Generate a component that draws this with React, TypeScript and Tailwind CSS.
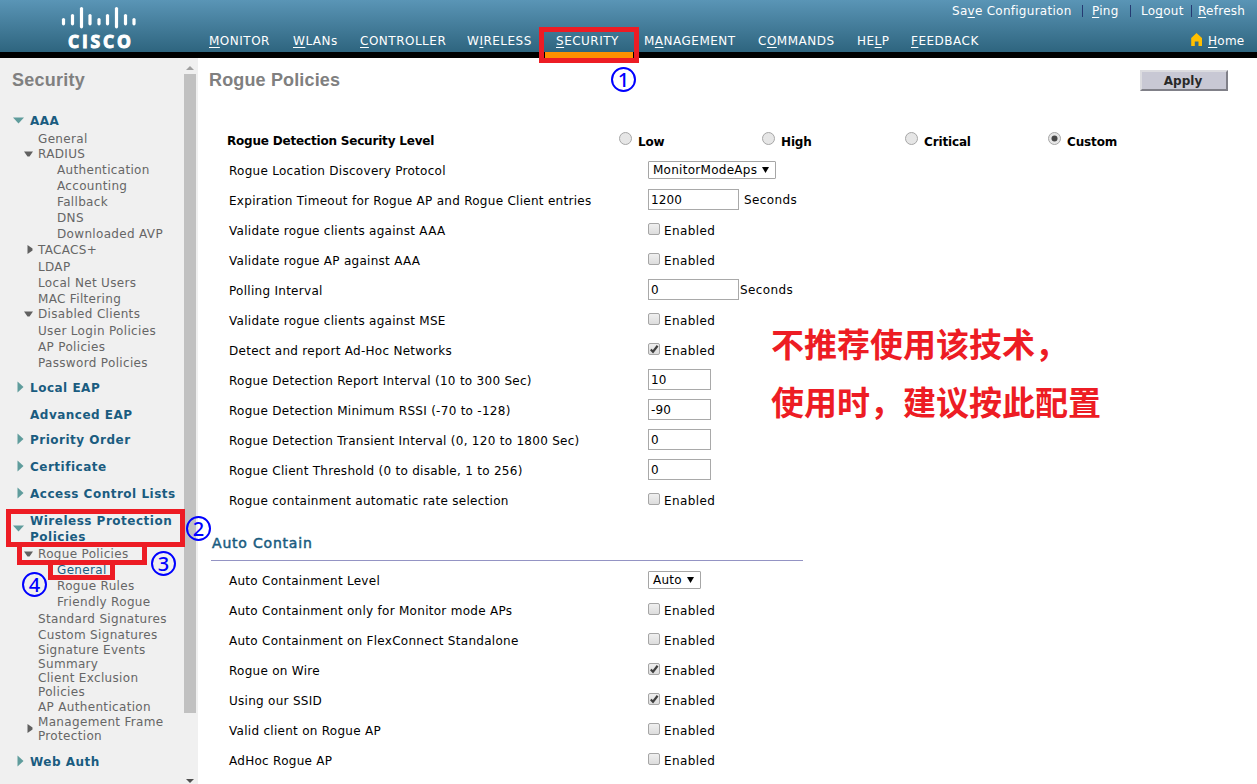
import React from "react";

type Mark = "down" | "right" | undefined;
type NavRow = { text: string; h: string; level: 0 | 1 | 2; mark?: Mark; markY?: string; active?: boolean };

const tree: NavRow[] = [
  { text: "AAA", h: "h-[21px]", level: 0, mark: "down" },
  { text: "General", h: "h-[18px]", level: 1 },
  { text: "RADIUS", h: "h-[15px]", level: 1, mark: "down" },
  { text: "Authentication", h: "h-[16px]", level: 2 },
  { text: "Accounting", h: "h-[16px]", level: 2 },
  { text: "Fallback", h: "h-[16px]", level: 2 },
  { text: "DNS", h: "h-[16px]", level: 2 },
  { text: "Downloaded AVP", h: "h-[16px]", level: 2 },
  { text: "TACACS+", h: "h-[16px]", level: 1, mark: "right" },
  { text: "LDAP", h: "h-[17px]", level: 1 },
  { text: "Local Net Users", h: "h-[16px]", level: 1 },
  { text: "MAC Filtering", h: "h-[16px]", level: 1 },
  { text: "Disabled Clients", h: "h-[15px]", level: 1, mark: "down" },
  { text: "User Login Policies", h: "h-[17px]", level: 1 },
  { text: "AP Policies", h: "h-[16px]", level: 1 },
  { text: "Password Policies", h: "h-[16px]", level: 1 },
  { text: "Local EAP", h: "h-[25px]", level: 0, mark: "right" },
  { text: "Advanced EAP", h: "h-[27px]", level: 0 },
  { text: "Priority Order", h: "h-[25px]", level: 0, mark: "right" },
  { text: "Certificate", h: "h-[27px]", level: 0, mark: "right" },
  { text: "Access Control Lists", h: "h-[27px]", level: 0, mark: "right" },
  { text: "Wireless Protection", h: "h-[27px]", level: 0, mark: "down", markY: "pt-[17px]" },
  { text: "Policies", h: "h-[16px]", level: 0 },
  { text: "Rogue Policies", h: "h-[17px]", level: 1, mark: "down" },
  { text: "General", h: "h-[16px]", level: 2, active: true },
  { text: "Rogue Rules", h: "h-[16px]", level: 2 },
  { text: "Friendly Rogue", h: "h-[16px]", level: 2 },
  { text: "Standard Signatures", h: "h-[17px]", level: 1 },
  { text: "Custom Signatures", h: "h-[16px]", level: 1 },
  { text: "Signature Events", h: "h-[15px]", level: 1 },
  { text: "Summary", h: "h-[14px]", level: 1 },
  { text: "Client Exclusion", h: "h-[14px]", level: 1 },
  { text: "Policies", h: "h-[14px]", level: 1 },
  { text: "AP Authentication", h: "h-[15px]", level: 1 },
  { text: "Management Frame", h: "h-[15px]", level: 1, mark: "right", markY: "pt-[14px]" },
  { text: "Protection", h: "h-[14px]", level: 1 },
  { text: "Web Auth", h: "h-[26px]", level: 0, mark: "right" },
];

function Triangle({ mark, level }: { mark: Mark; level: number }) {
  if (!mark) return null;
  if (level === 0)
    return mark === "down" ? (
      <svg width="11" height="7" className="fill-[#5f9c9c]"><path d="M0 0.5H11L5.5 6.5Z" /></svg>
    ) : (
      <svg width="7" height="12" className="fill-[#5f9c9c]"><path d="M0.5 0.5V11.5L6.5 6Z" /></svg>
    );
  return mark === "down" ? (
    <svg width="9" height="6" className="mt-[2px] fill-[#606060]"><path d="M0 0.5H9L5.5 5.5H3.5Z" /></svg>
  ) : (
    <svg width="6" height="9" className="fill-[#606060]"><path d="M0.5 0V9L5.5 5.5V3.5Z" /></svg>
  );
}

function TreeRow({ row }: { row: NavRow }) {
  const gutter = row.level === 0 ? "w-[30px] pr-[6px]" : row.level === 1 ? "w-[38px] pr-[5px]" : "w-[57px]";
  const look =
    row.level === 0
      ? "font-bold text-[#1a5c80] tracking-[0.5px]"
      : row.active
        ? "text-[#1a5c80] tracking-[0.33px]"
        : "text-[#666] tracking-[0.33px]";
  return (
    <div className={"flex shrink-0 items-end " + row.h}>
      <span className={"flex h-[18px] shrink-0 items-center justify-end " + gutter + " " + (row.markY ?? "")}>
        <Triangle mark={row.mark} level={row.level} />
      </span>
      <span className={"whitespace-nowrap text-[12px] leading-4 " + look}>{row.text}</span>
    </div>
  );
}

const tabs = [
  { pre: "", key: "M", post: "ONITOR", w: "w-[84px]" },
  { pre: "", key: "W", post: "LANs", w: "w-[67px]" },
  { pre: "", key: "C", post: "ONTROLLER", w: "w-[107px]" },
  { pre: "W", key: "I", post: "RELESS", w: "w-[89px]" },
  { pre: "", key: "S", post: "ECURITY", w: "w-[88px]" },
  { pre: "M", key: "A", post: "NAGEMENT", w: "w-[114px]" },
  { pre: "C", key: "O", post: "MMANDS", w: "w-[99px]" },
  { pre: "HE", key: "L", post: "P", w: "w-[54px]" },
  { pre: "", key: "F", post: "EEDBACK", w: "w-[80px]" },
];

function U({ children }: { children: React.ReactNode }) {
  return <span className="underline decoration-1 underline-offset-2">{children}</span>;
}

function Logo() {
  const bars = [
    [62, 18, 25], [71, 14, 25], [80, 7, 28], [88.5, 14, 25], [97.5, 18, 25],
    [106, 14, 25], [115, 7, 28], [124, 14, 25], [132.5, 18, 25],
  ];
  return (
    <svg width="198" height="52" className="shrink-0 overflow-visible">
      <g stroke="#fff" strokeWidth="3.2" strokeLinecap="round">
        {bars.map(([x, a, b]) => (
          <line key={x} x1={x + 1.5} x2={x + 1.5} y1={a + 1.5} y2={b - 1.2} />
        ))}
      </g>
      <text x="68" y="47.5" textLength="63" fill="#fff" stroke="#fff" strokeWidth="1" className="font-['Open_Sans',sans-serif] text-[17.5px] font-bold">CISCO</text>
    </svg>
  );
}

function Check({ on }: { on?: boolean }) {
  return (
    <svg width="12" height="12" className="mb-[3px] shrink-0">
      <defs>
        <linearGradient id="box" x1="0" y1="0" x2="0" y2="1">
          <stop offset="0" stopColor="#f0f0f0" /><stop offset="1" stopColor="#dcdcdc" />
        </linearGradient>
      </defs>
      <rect x="0.5" y="0.5" width="11" height="11" rx="1.5" fill="url(#box)" stroke="#a6a6a6" />
      {on && <path d="M2.8 6.4L5 8.7L9.6 2.8" fill="none" stroke="#404040" strokeWidth="2.2" />}
    </svg>
  );
}

function Radio({ label, on }: { label: string; on?: boolean }) {
  return (
    <div className="flex w-[143px] items-center">
      <svg width="13" height="13" className="mb-[3px] shrink-0">
        <circle cx="6.5" cy="6.5" r="6" fill="#e6e6e6" stroke="#a6a6a6" />
        {on && <circle cx="6.5" cy="6.5" r="3" fill="#484848" />}
      </svg>
      <span className="ml-[6px] pt-[3px] tracking-[-0.15px]">{label}</span>
    </div>
  );
}

function Enabled({ on }: { on?: boolean }) {
  return (
    <>
      <Check on={on} />
      <span className="ml-1 pt-px tracking-[0.38px]">Enabled</span>
    </>
  );
}

function Field({ value, wide }: { value: string; wide?: boolean }) {
  return (
    <input
      defaultValue={value}
      className={"mb-[2px] h-[21px] border border-[#a9a9a9] bg-white pl-[2px] pt-[2px] text-[12px] tracking-[0.1px] outline-none " + (wide ? "w-[91px]" : "w-[63px]")}
    />
  );
}

function Pick({ value, w }: { value: string; w: string }) {
  return (
    <div className={"flex h-[18px] items-center justify-between rounded-[1px] border border-[#a6a6a6] bg-white pl-1 pr-[6px] " + w}>
      <span className="tracking-[0.27px]">{value}</span>
      <svg width="7" height="6" className="mb-px"><path d="M0 0H7L3.5 6Z" /></svg>
    </div>
  );
}

function Row({ label, children }: { label: string; children: React.ReactNode }) {
  return (
    <div className="flex h-[30px] items-center whitespace-nowrap text-[12px]">
      <span className="w-[420px] shrink-0 pl-px pt-px tracking-[0.28px]">{label}</span>
      {children}
    </div>
  );
}

function Badge({ n, pos }: { n: string; pos: string }) {
  return (
    <span className={"absolute flex size-[25px] items-center justify-center rounded-full border-[2.5px] border-[#0000ff] font-['Noto_Sans',sans-serif] text-[20px] font-medium leading-none text-[#0000ff] " + pos}>
      {n}
    </span>
  );
}

export default function App() {
  return (
    <div className="relative flex h-[784px] w-[1257px] flex-col overflow-hidden bg-white font-['DejaVu_Sans',sans-serif] text-[12px] text-black">
      <header className="flex h-[58px] shrink-0 border-b-[6px] border-black bg-linear-to-b from-[#5a95b6] to-[#2e657f] text-white">
        <Logo />
        <div className="flex flex-1 flex-col">
          <div className="flex h-[22px] items-center whitespace-nowrap pl-[754px] tracking-[0.27px]">
            <span className="w-[130px] shrink-0">Sa<U>v</U>e Configuration</span>
            <span className="h-3 w-px shrink-0 bg-[#253a72]" />
            <span className="w-[47px] shrink-0 pl-[9px]"><U>P</U>ing</span>
            <span className="h-3 w-px shrink-0 bg-[#253a72]" />
            <span className="w-[60px] shrink-0 pl-[10px]">Lo<U>g</U>out</span>
            <span className="h-3 w-px shrink-0 bg-[#253a72]" />
            <span className="shrink-0 pl-[6px]"><U>R</U>efresh</span>
          </div>
          <div className="flex h-[30px] items-center whitespace-nowrap pl-[11px] pt-[8px] tracking-[0.5px]">
            {tabs.map((t) => (
              <span key={t.post} className={"shrink-0 " + t.w}>{t.pre}<U>{t.key}</U>{t.post}</span>
            ))}
            <svg width="11" height="13" className="mb-[4px] ml-[200px] shrink-0"><path d="M5.5 0L11 5V13H7.5V8.5H3.8V13H0.2V5Z" fill="#ffc000" /></svg>
            <span className="ml-[6px] tracking-[0.27px]"><U>H</U>ome</span>
          </div>
        </div>
      </header>

      <div className="flex min-h-0 flex-1">
        <aside className="flex w-[198px] shrink-0 bg-[#f0f0f0]">
          <nav className="flex h-[726px] w-[184px] flex-col overflow-hidden">
            <h1 className="h-[50px] shrink-0 pl-3 pt-[10px] font-['Liberation_Sans',sans-serif] text-[18px] font-bold leading-6 tracking-[0.25px] text-[#808080]">Security</h1>
            {tree.map((r, i) => <TreeRow key={i} row={r} />)}
          </nav>
          <div className="flex w-3 flex-col items-center justify-between pb-[1px] pt-[8px]">
            <svg width="8" height="4" className="fill-[#a0a0a0]"><path d="M0 4L4 0L8 4Z" /></svg>
            <div className="mb-[66px] mt-1 h-[639px] w-3 shrink-0 bg-[#c1c1c1]" />
            <svg width="8" height="4" className="shrink-0 fill-[#505050]"><path d="M0 0L4 4L8 0Z" /></svg>
          </div>
        </aside>

        <main className="flex-1">
          <div className="flex h-[67px] justify-between pl-[11px] pr-[29px] pt-[10px]">
            <h2 className="font-['Liberation_Sans',sans-serif] text-[18px] font-bold leading-6 tracking-[0.15px] text-[#808080]">Rogue Policies</h2>
            <button className="mt-[2px] h-[21px] w-[88px] border-2 border-b-[#808088] border-l-[#dcdce0] border-r-[#808088] border-t-[#dcdce0] bg-[#c8c8d4] pr-[2px] text-[12px] font-bold leading-none text-[#282828]">Apply</button>
          </div>
          <section className="pl-[30px]">
            <div className="flex h-[30px] items-center text-[12px] font-bold">
              <span className="-ml-px w-[392px] pt-px tracking-[-0.19px]">Rogue Detection Security Level</span>
              <Radio label="Low" />
              <Radio label="High" />
              <Radio label="Critical" />
              <Radio label="Custom" on />
            </div>
            <Row label="Rogue Location Discovery Protocol"><Pick value="MonitorModeAps" w="w-[128px]" /></Row>
            <Row label="Expiration Timeout for Rogue AP and Rogue Client entries"><Field value="1200" wide /><span className="mb-px ml-[5px] tracking-[0.38px]">Seconds</span></Row>
            <Row label="Validate rogue clients against AAA"><Enabled /></Row>
            <Row label="Validate rogue AP against AAA"><Enabled /></Row>
            <Row label="Polling Interval"><Field value="0" wide /><span className="mb-px ml-px tracking-[0.38px]">Seconds</span></Row>
            <Row label="Validate rogue clients against MSE"><Enabled /></Row>
            <Row label="Detect and report Ad-Hoc Networks"><Enabled on /></Row>
            <Row label="Rogue Detection Report Interval (10 to 300 Sec)"><Field value="10" /></Row>
            <Row label="Rogue Detection Minimum RSSI (-70 to -128)"><Field value="-90" /></Row>
            <Row label="Rogue Detection Transient Interval (0, 120 to 1800 Sec)"><Field value="0" /></Row>
            <Row label="Rogue Client Threshold (0 to disable, 1 to 256)"><Field value="0" /></Row>
            <Row label="Rogue containment automatic rate selection"><Enabled /></Row>
          </section>
          <h3 className="ml-[13px] flex h-[46px] w-[592px] items-end border-b border-[#9494c4] pb-[7px] pl-px text-[14px] leading-5 tracking-[0.8px] text-[#1a5c80] [-webkit-text-stroke:0.5px_#1a5c80]">Auto Contain</h3>
          <section className="pl-[30px] pt-[4px]">
            <Row label="Auto Containment Level"><Pick value="Auto" w="w-[53px]" /></Row>
            <Row label="Auto Containment only for Monitor mode APs"><Enabled /></Row>
            <Row label="Auto Containment on FlexConnect Standalone"><Enabled /></Row>
            <Row label="Rogue on Wire"><Enabled on /></Row>
            <Row label="Using our SSID"><Enabled on /></Row>
            <Row label="Valid client on Rogue AP"><Enabled /></Row>
            <Row label="AdHoc Rogue AP"><Enabled /></Row>
          </section>
        </main>
      </div>

      <div className="absolute left-[545px] top-[52px] h-[6px] w-[88px] bg-[#ff9000]" />
      <div className="absolute left-[539px] top-[27px] h-[36px] w-[100px] border-[5px] border-[#ed1c24]" />
      <div className="absolute left-[6px] top-[509px] h-[38px] w-[179px] border-[5px] border-[#ed1c24]" />
      <div className="absolute left-[17px] top-[545px] h-[20px] w-[130px] border-[5px] border-t-[2px] border-[#ed1c24]" />
      <div className="absolute left-[48px] top-[560px] h-[20px] w-[67px] border-[5px] border-t-0 border-[#ed1c24]" />
      <Badge n="1" pos="left-[611px] top-[67px]" />
      <Badge n="2" pos="left-[186px] top-[516px]" />
      <Badge n="3" pos="left-[151px] top-[551px]" />
      <Badge n="4" pos="left-[22px] top-[572px]" />
      <div className="absolute left-[771px] top-[314px] whitespace-nowrap font-['Noto_Sans_CJK_SC',sans-serif] text-[33px] font-bold leading-[58px] text-[#ed1c24]">
        <p>不推荐使用该技术，</p>
        <p>使用时，建议按此配置</p>
      </div>
    </div>
  );
}
